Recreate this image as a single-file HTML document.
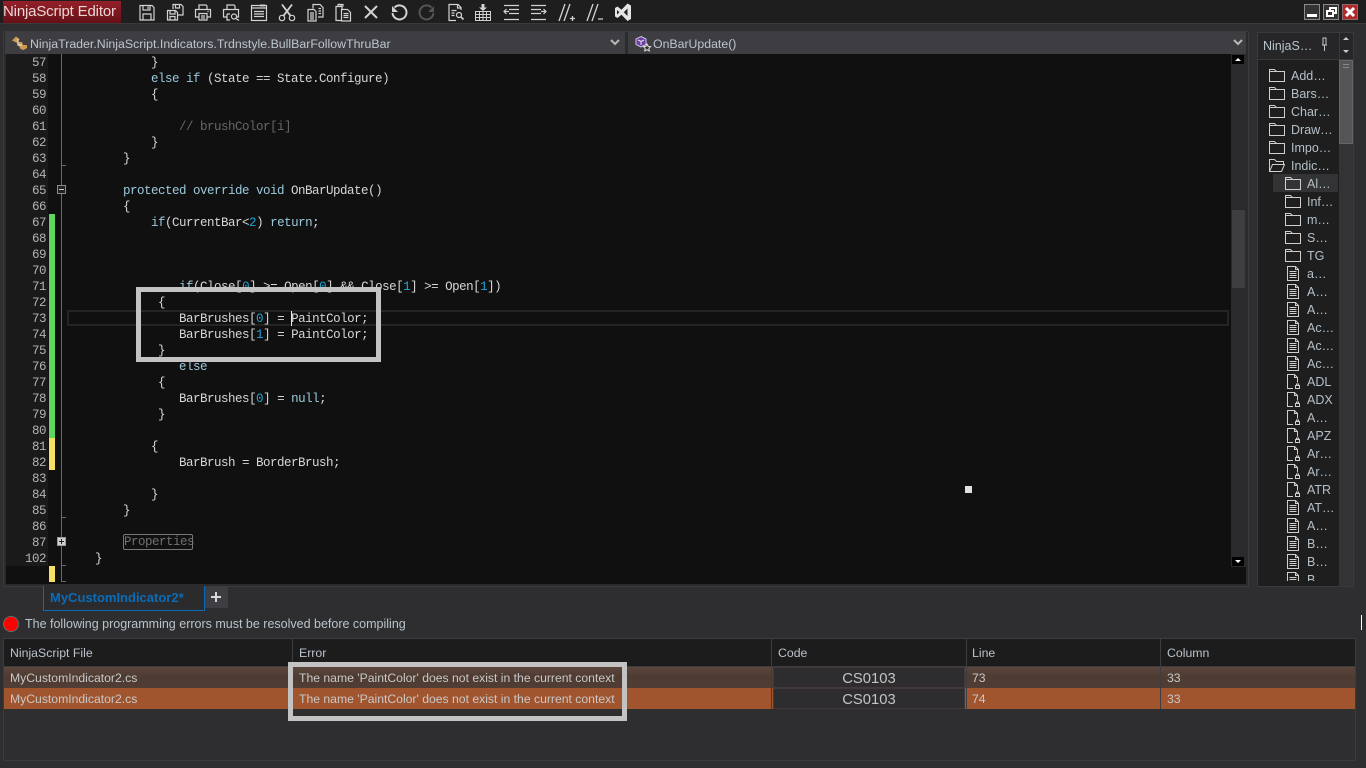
<!DOCTYPE html>
<html><head><meta charset="utf-8"><title>NinjaScript Editor</title>
<style>
*{box-sizing:border-box}
html,body{margin:0;padding:0;width:1366px;height:768px;overflow:hidden;background:#2e2e30;font-family:"Liberation Sans",sans-serif}
.a{position:absolute}
#code div{height:16px;white-space:pre;font:12.5px/16px "Liberation Mono",monospace;letter-spacing:-.5px;color:#d6d6d6}
#nums div{height:16px;font:12.5px/16px "Liberation Mono",monospace;letter-spacing:-.5px;color:#b4b4b4;text-align:right}
.k{color:#9cc9dc}.n{color:#1fa6d8}.c{color:#666}
.r{position:absolute;height:18px;width:100%;font-size:12.5px;line-height:18px;color:#b4c0c8;white-space:nowrap}
.r svg{position:absolute;top:0;width:16px;height:16px;fill:none;stroke:#cfcfcf;stroke-width:1}
.r span{position:absolute}
.fo svg{left:11px}.fo span{left:33px}
.su svg{left:27px}.su span{left:49px}
.fi svg{left:28px}.fi span{left:49px}
.t{position:absolute;top:2px;width:20px;height:20px;fill:none;stroke:#d2d2d2;stroke-width:1.2}
.row{position:absolute;left:4px;width:1351px;height:21px;font-size:12.2px;line-height:23px;color:#c8c8c8}
.row span{position:absolute;white-space:nowrap}
.th{position:absolute;top:639px;height:27px;font-size:12.3px;line-height:29px;color:#b9c3cb}
.sep{position:absolute;width:1px;background:#3e3e40}
</style></head><body>

<svg width="0" height="0" style="position:absolute"><defs>
<symbol id="fo" viewBox="0 0 16 16"><path d="M.5 14.500V2.500h5l2 2h8v10zM.5 4.500h7"/></symbol>
<symbol id="fd" viewBox="0 0 16 16"><path d="M1.500 1.500h8l3 3v11h-11zM9.500 1.500v3h3M3.500 6.500h7M3.500 8.500h7M3.500 10.500h7M3.500 12.500h7"/></symbol>
<symbol id="fl" viewBox="0 0 16 16"><path d="M7 15.500H1.500v-14h7l3 3v5M8.500 1.500v3h3"/><path d="M9.500 12.500h4v3h-4zM10.500 12.500v-1.500h2v1.500" stroke-width="1"/></symbol>
</defs></svg>

<!-- title bar -->
<div class="a" style="left:0;top:0;width:1366px;height:24px;background:#1e1e1f"></div>
<div class="a" style="left:0;top:23px;width:1366px;height:1px;background:#3a3a3c"></div>
<div class="a" style="left:3px;top:1px;width:118px;height:22px;background:linear-gradient(#94202a,#661016)"></div>
<div class="a" style="left:3px;top:1px;height:22px;font-size:15px;letter-spacing:-.17px;line-height:22px;color:#ecd6d6;white-space:nowrap">NinjaScript Editor</div>

<!-- toolbar -->
<svg class="t" style="left:137px"><path d="M3 3.500h12l2 2V18H3zM6 3.500V8h7V3.500M11 4.500V7M6 18v-6h8v6"/></svg>
<svg class="t" style="left:165px"><path d="M8 7V2.500h8l2 2V13h-5M10.500 2.500V6h4V2.500M2.500 8.500h8l2 2V18h-10zM5 8.500V12h5V8.500M5 18v-3.500h5V18"/></svg>
<svg class="t" style="left:193px"><path d="M6 7V3h7l1 1v3M6 15H2.500V7.500h15V15H14M6 11.500h8V18H6zM8 14h4M8 16h4M14.500 9.500h1"/></svg>
<svg class="t" style="left:221px"><path d="M6 7V3h7l1 1v3M6 15H2.500V7.500h15V15H16M6 12h3M6 12v6h3"/><circle cx="13" cy="14.500" r="2.500"/><path d="M15 16.500l3 2"/></svg>
<svg class="t" style="left:249px"><path d="M2.500 3.500h15v15h-15zM2.500 6h15M5 9.500h10M5 12h10M5 14.500h10"/><path d="M11 2.500h5v2h-5z" fill="#d2d2d2" stroke="none"/></svg>
<svg class="t" style="left:277px"><circle cx="5" cy="16" r="2.700"/><circle cx="15" cy="16" r="2.700"/><path d="M6.500 13.800L15 2.500M13.500 13.800L5 2.500" stroke-width="1.800"/></svg>
<svg class="t" style="left:305px"><path d="M8 6.500V2.500h7l3 3V15h-5M3 7.500h6l2 2V19H3zM5 11h4M5 13h4M5 15h4M5 17h4M13.500 6.500H16M13.500 9H16M13.500 11.500H16"/></svg>
<svg class="t" style="left:333px"><path d="M9 7V4.500H3v14h5M5 4.500V2.500h3v2M8.500 7.500h6l3 3v8.500h-9zM10.500 11.500h5M10.500 13.500h5M10.500 15.500h5"/><path d="M5 2.500h5v2" /></svg>
<svg class="t" style="left:361px;stroke-width:2"><path d="M4 4l12 12M16 4L4 16"/></svg>
<svg class="t" style="left:389px;stroke-width:2"><path d="M5.500 5.500A7 7 0 1 1 3.500 11"/><path d="M3 4v6h6z" fill="#d2d2d2" stroke="none"/></svg>
<svg class="t" style="left:417px;stroke:#555;stroke-width:2"><path d="M14.500 5.500A7 7 0 1 0 16.500 11"/><path d="M17 4v6h-6z" fill="#555" stroke="none"/></svg>
<svg class="t" style="left:445px"><path d="M16 8V5.500l-3-3H4v16h7M12.500 2.500V6H16M6.500 8.500h5M6.500 11h3M6.500 13.500h3"/><circle cx="14" cy="13" r="2.500"/><path d="M16 15l2.500 2.500" stroke-width="1.600"/></svg>
<svg class="t" style="left:473px"><path d="M2.500 9.500h15v9h-15zM2.500 12.500h15M2.500 15.500h15M6.500 9.500v9M10 9.500v9M13.500 9.500v9" stroke-width="1"/><path d="M8.500 2h3v3.500h2.500L10 9 6 5.500h2.500z" fill="#d2d2d2" stroke="none"/></svg>
<svg class="t" style="left:501px"><path d="M3 3.500h15M8 7.500h10M8 11.500h10M8 15.500h0M3 17.500h15M8 9.500H3M5.500 7L3 9.500 5.500 12"/></svg>
<svg class="t" style="left:529px"><path d="M2 3.500h15M2 7.500h10M2 11.500h10M2 17.500h15M12 9.500h5M14.500 7L17 9.500 14.500 12"/></svg>
<svg class="t" style="left:557px;stroke-width:1.300"><path d="M2 19L8 2M7 19L13 2M13 16.500h5M15.500 14v5"/></svg>
<svg class="t" style="left:585px;stroke-width:1.300"><path d="M2 19L8 2M7 19L13 2M13 17h5"/></svg>
<svg class="t" style="left:613px;stroke:none;fill:#e4e4e4"><path fill-rule="evenodd" d="M14.500 1.500L18 3.500V17l-3.500 2L8.500 12.800 4.500 16 2 14.500V6l2.500-1.500 4 3.200zM14.500 6.500L10.800 10.200 14.500 14zM4 8v4.500l2.400-2.200z"/></svg>

<!-- window buttons -->
<div class="a" style="left:1304px;top:4px;width:16px;height:16px;background:#333;border:1px solid #8a8a8a"><div class="a" style="left:2px;top:9px;width:10px;height:3px;background:#fff"></div></div>
<div class="a" style="left:1323px;top:4px;width:16px;height:16px;background:#333;border:1px solid #8a8a8a"><div class="a" style="left:5px;top:2px;width:8px;height:7px;border:2px solid #fff"></div><div class="a" style="left:2px;top:5px;width:8px;height:7px;border:2px solid #fff;background:#333"></div></div>
<svg class="a" style="left:1342px;top:4px" width="16" height="16"><rect width="16" height="16" fill="#b02a2c"/><rect x=".5" y=".5" width="15" height="15" fill="none" stroke="#8a6a6a"/><path d="M4 4l8 8M12 4l-8 8" stroke="#fff" stroke-width="3"/></svg>

<!-- editor frame -->
<div class="a" style="left:3px;top:31px;width:1246px;height:556px;background:#2b2b2d;border:1px solid #3c3c3e"></div>
<div class="a" style="left:5px;top:32px;width:620px;height:22px;background:#3e3e42"></div>
<div class="a" style="left:628px;top:32px;width:618px;height:22px;background:#3e3e42"></div>
<svg class="a" style="left:11px;top:35px" width="18" height="17"><path d="M1 5.500L5 1.500l3.500 2.500L6 8zM7 7l4 0 1 3h4l0 3-3.500 2-3-1-1.500-3z" fill="#d09a50"/><path d="M7 4v6h4" fill="none" stroke="#e8e0d0" stroke-width="1.200"/></svg>
<div class="a" style="left:30px;top:32px;height:22px;font-size:12.35px;line-height:24px;color:#bcc6ce;white-space:nowrap">NinjaTrader.NinjaScript.Indicators.Trdnstyle.BullBarFollowThruBar</div>
<svg class="a" style="left:609px;top:38px" width="12" height="10"><path d="M2 2l4 4 4-4" fill="none" stroke="#b8b8b8" stroke-width="2"/></svg>
<svg class="a" style="left:634px;top:35px" width="18" height="17"><path d="M7 1.500l5 2.500v5.500L7 12 2 9.500V4z" fill="#6b3fa0" stroke="#cfc4e0"/><path d="M4 5l3 1.500L10 5M7 6.500V10" fill="none" stroke="#e8e0f0"/><path d="M13 9l1.200 2.400 2.400.3-1.800 1.700.5 2.500-2.300-1.200-2.300 1.200.5-2.500-1.800-1.700 2.400-.3z" fill="#333" stroke="#ddd"/></svg>
<div class="a" style="left:653px;top:32px;height:22px;font-size:12.3px;line-height:24px;color:#bcc6ce;white-space:nowrap">OnBarUpdate()</div>
<svg class="a" style="left:1232px;top:38px" width="12" height="10"><path d="M2 2l4 4 4-4" fill="none" stroke="#b8b8b8" stroke-width="2"/></svg>

<!-- editor -->
<div class="a" style="left:6px;top:54px;width:1240px;height:530px;background:#101010"></div>
<div class="a" style="left:6px;top:54px;width:42px;height:512px;background:#1a1a1a"></div>
<div class="a" id="nums" style="left:6px;top:55px;width:40px">
<div>57</div><div>58</div><div>59</div><div>60</div><div>61</div><div>62</div><div>63</div><div>64</div><div>65</div><div>66</div><div>67</div><div>68</div><div>69</div><div>70</div><div>71</div><div>72</div><div>73</div><div>74</div><div>75</div><div>76</div><div>77</div><div>78</div><div>79</div><div>80</div><div>81</div><div>82</div><div>83</div><div>84</div><div>85</div><div>86</div><div>87</div><div>102</div>
</div>
<div class="a" style="left:49px;top:214px;width:6px;height:224px;background:#5fd75f"></div>
<div class="a" style="left:49px;top:438px;width:6px;height:32px;background:#f5e063"></div>
<div class="a" style="left:49px;top:566px;width:6px;height:16px;background:#f5e063"></div>
<div class="a" style="left:61px;top:54px;width:1px;height:528px;background:#6a6a6a"></div>
<div class="a" style="left:62px;top:165px;width:4px;height:1px;background:#6a6a6a"></div>
<div class="a" style="left:62px;top:517px;width:4px;height:1px;background:#6a6a6a"></div>
<div class="a" style="left:62px;top:565px;width:4px;height:1px;background:#6a6a6a"></div>
<div class="a" style="left:62px;top:581px;width:4px;height:1px;background:#6a6a6a"></div>
<svg class="a" style="left:57px;top:185px" width="9" height="9"><rect x=".5" y=".5" width="8" height="8" fill="#222" stroke="#8a8a8a"/><path d="M2 4.500h5" stroke="#ccc"/></svg>
<svg class="a" style="left:57px;top:537px" width="9" height="9"><rect x=".5" y=".5" width="8" height="8" fill="#d0d0d0" stroke="#999"/><path d="M2 4.500h5M4.500 2v5" stroke="#222"/></svg>
<div class="a" style="left:67px;top:310px;width:1162px;height:16px;border:2px solid #242424"></div>

<div class="a" id="code" style="left:67px;top:55px;width:1150px">
<div>            }</div>
<div>            <span class="k">else if</span> (State == State.Configure)</div>
<div>            {</div>
<div> </div>
<div>                <span class="c">// brushColor[i]</span></div>
<div>            }</div>
<div>        }</div>
<div> </div>
<div>        <span class="k">protected override void</span> OnBarUpdate()</div>
<div>        {</div>
<div>            <span class="k">if</span>(CurrentBar&lt;<span class="n">2</span>) <span class="k">return</span>;</div>
<div> </div>
<div> </div>
<div> </div>
<div>                <span class="k">if</span>(Close[<span class="n">0</span>] &gt;= Open[<span class="n">0</span>] &amp;&amp; Close[<span class="n">1</span>] &gt;= Open[<span class="n">1</span>])</div>
<div>             {</div>
<div>                BarBrushes[<span class="n">0</span>] = PaintColor;</div>
<div>                BarBrushes[<span class="n">1</span>] = PaintColor;</div>
<div>             }</div>
<div>                <span class="k">else</span></div>
<div>             {</div>
<div>                BarBrushes[<span class="n">0</span>] = <span class="k">null</span>;</div>
<div>             }</div>
<div> </div>
<div>            {</div>
<div>                BarBrush = BorderBrush;</div>
<div> </div>
<div>            }</div>
<div>        }</div>
<div> </div>
<div> </div>
<div>    }</div>
</div>
<div class="a" style="left:123px;top:534px;width:70px;height:16px;border:1px solid #777;border-radius:2px;font:12.5px/15px 'Liberation Mono',monospace;letter-spacing:-.5px;color:#707070;white-space:nowrap">Properties</div>
<div class="a" style="left:291px;top:311px;width:1px;height:15px;background:#eee"></div>

<!-- editor scrollbar -->
<div class="a" style="left:1231px;top:54px;width:15px;height:513px;background:#2a2a2c"></div>
<div class="a" style="left:1232px;top:210px;width:13px;height:78px;background:#3e3e40"></div>
<div class="a" style="left:1232px;top:55px;width:12px;height:9px;background:#000"></div>
<div class="a" style="left:1232px;top:557px;width:12px;height:9px;background:#000"></div>
<svg class="a" style="left:1233px;top:56px" width="10" height="7"><path d="M2 5h6L5 2z" fill="#fff"/></svg>
<svg class="a" style="left:1233px;top:558px" width="10" height="7"><path d="M2 2h6L5 5z" fill="#fff"/></svg>
<div class="a" style="left:965px;top:486px;width:7px;height:7px;background:#e0e0e0"></div>

<!-- right panel -->
<div class="a" style="left:1257px;top:32px;width:97px;height:555px;background:#1e1e1f;border:1px solid #3a3a3c"></div>
<div class="a" style="left:1258px;top:33px;width:95px;height:26px;background:#262628"></div>
<div class="a" style="left:1258px;top:59px;width:95px;height:1px;background:#3a3a3c"></div>
<div class="a" style="left:1339px;top:33px;width:1px;height:27px;background:#3a3a3c"></div>
<div class="a" style="left:1263px;top:33px;height:26px;font-size:12.5px;line-height:27px;color:#b8c4cc;white-space:nowrap">NinjaS…</div>
<svg class="a" style="left:1320px;top:37px" width="9" height="16"><path d="M3 1h3v7H3zM2 8h5M4.500 8v6" fill="none" stroke="#c8c8c8"/></svg>
<svg class="a" style="left:1341px;top:35px" width="10" height="7"><path d="M2 5h6L5 2z" fill="#ccc"/></svg>
<svg class="a" style="left:1341px;top:48px" width="10" height="7"><path d="M2 2h6L5 5z" fill="#ccc"/></svg>
<div class="a" style="left:1339px;top:60px;width:14px;height:526px;background:#333335"></div>
<div class="a" style="left:1339px;top:60px;width:14px;height:84px;background:#555557;border:1px solid #666"></div>
<div class="a" style="left:1343px;top:64px;width:6px;height:1px;background:#888;box-shadow:0 3px #888"></div>
<div class="a" style="left:1273px;top:174px;width:65px;height:18px;background:#333335"></div>

<div class="a" style="left:1258px;top:67px;width:81px;height:514px;overflow:hidden">
<div class="r fo" style="top:0"><svg><use href="#fo"/></svg><span>Add…</span></div>
<div class="r fo" style="top:18px"><svg><use href="#fo"/></svg><span>Bars…</span></div>
<div class="r fo" style="top:36px"><svg><use href="#fo"/></svg><span>Char…</span></div>
<div class="r fo" style="top:54px"><svg><use href="#fo"/></svg><span>Draw…</span></div>
<div class="r fo" style="top:72px"><svg><use href="#fo"/></svg><span>Impo…</span></div>
<div class="r fo" style="top:90px"><svg viewBox="0 0 16 16"><path d="M.5 14.500V2.500h5l2 2h7v3M.5 14.500l3-7h12l-3 7z"/></svg><span>Indic…</span></div>
<div class="r su" style="top:108px"><svg><use href="#fo"/></svg><span>Al…</span></div>
<div class="r su" style="top:126px"><svg><use href="#fo"/></svg><span>Inf…</span></div>
<div class="r su" style="top:144px"><svg><use href="#fo"/></svg><span>m…</span></div>
<div class="r su" style="top:162px"><svg><use href="#fo"/></svg><span>S…</span></div>
<div class="r su" style="top:180px"><svg><use href="#fo"/></svg><span>TG</span></div>
<div class="r fi" style="top:198px"><svg><use href="#fd"/></svg><span>a…</span></div>
<div class="r fi" style="top:216px"><svg><use href="#fd"/></svg><span>A…</span></div>
<div class="r fi" style="top:234px"><svg><use href="#fd"/></svg><span>A…</span></div>
<div class="r fi" style="top:252px"><svg><use href="#fd"/></svg><span>Ac…</span></div>
<div class="r fi" style="top:270px"><svg><use href="#fd"/></svg><span>Ac…</span></div>
<div class="r fi" style="top:288px"><svg><use href="#fd"/></svg><span>Ac…</span></div>
<div class="r fi" style="top:306px"><svg><use href="#fl"/></svg><span>ADL</span></div>
<div class="r fi" style="top:324px"><svg><use href="#fl"/></svg><span>ADX</span></div>
<div class="r fi" style="top:342px"><svg><use href="#fl"/></svg><span>A…</span></div>
<div class="r fi" style="top:360px"><svg><use href="#fl"/></svg><span>APZ</span></div>
<div class="r fi" style="top:378px"><svg><use href="#fl"/></svg><span>Ar…</span></div>
<div class="r fi" style="top:396px"><svg><use href="#fl"/></svg><span>Ar…</span></div>
<div class="r fi" style="top:414px"><svg><use href="#fl"/></svg><span>ATR</span></div>
<div class="r fi" style="top:432px"><svg><use href="#fd"/></svg><span>AT…</span></div>
<div class="r fi" style="top:450px"><svg><use href="#fd"/></svg><span>A…</span></div>
<div class="r fi" style="top:468px"><svg><use href="#fd"/></svg><span>B…</span></div>
<div class="r fi" style="top:486px"><svg><use href="#fd"/></svg><span>B…</span></div>
<div class="r fi" style="top:504px"><svg><use href="#fd"/></svg><span>B…</span></div>
</div>

<!-- tabs -->
<div class="a" style="left:43px;top:586px;width:162px;height:25px;background:#2b2b2d;border:1px solid #0a6cb8;border-top:0"></div>
<div class="a" style="left:50px;top:586px;height:24px;font-size:13px;font-weight:bold;line-height:23px;color:#0a6cb8;white-space:nowrap">MyCustomIndicator2*</div>
<div class="a" style="left:205px;top:587px;width:23px;height:21px;background:#3e3e42"></div>
<svg class="a" style="left:210px;top:591px" width="12" height="12"><path d="M6 1v10M1 6h10" stroke="#d8d8d8" stroke-width="2"/></svg>

<!-- error bar -->
<div class="a" style="left:3px;top:616px;width:16px;height:16px;border-radius:50%;background:#ff0000;border:1px solid #6a6a6a"></div>
<div class="a" style="left:25px;top:615px;height:18px;font-size:12.5px;line-height:18px;color:#b9c3cb;white-space:nowrap">The following programming errors must be resolved before compiling</div>
<div class="a" style="left:1361px;top:615px;width:1px;height:15px;background:#fff"></div>

<!-- table -->
<div class="a" style="left:3px;top:638px;width:1353px;height:123px;border:1px solid #3c3c3e"></div>
<div class="a" style="left:4px;top:639px;width:1351px;height:27px;background:#1c1c1d"></div>
<div class="a" style="left:4px;top:666px;width:1351px;height:1px;background:#3c3c3e"></div>
<div class="th" style="left:10px">NinjaScript File</div>
<div class="th" style="left:299px">Error</div>
<div class="th" style="left:778px">Code</div>
<div class="th" style="left:972px">Line</div>
<div class="th" style="left:1167px">Column</div>

<div class="row" style="top:667px;background:linear-gradient(#5c473e,#4e3b32 45%,#503d34)">
<span style="left:6px">MyCustomIndicator2.cs</span><span style="left:295px">The name 'PaintColor' does not exist in the current context</span><span style="left:968px">73</span><span style="left:1163px">33</span></div>
<div class="row" style="top:688px;background:#a0552f">
<span style="left:6px">MyCustomIndicator2.cs</span><span style="left:295px">The name 'PaintColor' does not exist in the current context</span><span style="left:968px">74</span><span style="left:1163px">33</span></div>
<div class="a" style="left:773px;top:667px;width:192px;height:21px;background:#2d2d30;border:1px solid #44393a;color:#c4c4c4;font-size:14.8px;line-height:22px;text-align:center">CS0103</div>
<div class="a" style="left:773px;top:688px;width:192px;height:21px;background:#2d2d30;border:1px solid #44393a;color:#c4c4c4;font-size:14.8px;line-height:22px;text-align:center">CS0103</div>
<div class="sep" style="left:292px;top:639px;height:70px"></div>
<div class="sep" style="left:771px;top:639px;height:70px"></div>
<div class="sep" style="left:966px;top:639px;height:70px"></div>
<div class="sep" style="left:1160px;top:639px;height:70px"></div>

<!-- annotations -->
<div class="a" style="left:136px;top:287px;width:245px;height:75px;border:5px solid #c3c3c3"></div>
<div class="a" style="left:288px;top:662px;width:339px;height:59px;border:5px solid #c3c3c3"></div>
</body></html>
